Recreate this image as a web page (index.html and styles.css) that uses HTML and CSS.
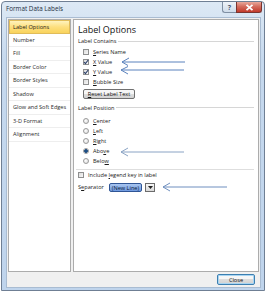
FILE: index.html
```html
<!DOCTYPE html>
<html>
<head>
<meta charset="utf-8">
<link rel="stylesheet" href="styles.css">
</head>
<body>
<div class="window">
  <div class="titlebar">
    <span class="title">Format Data Labels</span>
    <div class="caption-btns">
      <span class="cbtn help">?</span>
      <span class="cbtn close"><svg width="9" height="7" viewBox="0 0 9 7"><path d="M1.5 0.8 L7.5 6.2 M7.5 0.8 L1.5 6.2" stroke="#fff" stroke-width="1.8"/></svg></span>
    </div>
  </div>
  <div class="client">
    <div class="panes">
      <ul class="nav">
        <li class="sel">Label Options</li>
        <li>Number</li>
        <li>Fill</li>
        <li>Border Color</li>
        <li>Border Styles</li>
        <li>Shadow</li>
        <li>Glow and Soft Edges</li>
        <li>3-D Format</li>
        <li>Alignment</li>
      </ul>
      <div class="content">
        <div class="heading">Label Options</div>
        <div class="group-label"><span>Label Contains</span></div>
        <div class="opts">
          <div class="row"><span class="cb"></span><span><u>S</u>eries Name</span></div>
          <div class="row"><span class="cb on"><svg width="6" height="6" viewBox="0 0 6 6"><path d="M1 3 L2.4 4.6 L5.2 1" stroke="#2a3f6a" stroke-width="1.1" fill="none"/></svg></span><span><u>X</u> Value</span></div>
          <div class="row"><span class="cb on"><svg width="6" height="6" viewBox="0 0 6 6"><path d="M1 3 L2.4 4.6 L5.2 1" stroke="#2a3f6a" stroke-width="1.1" fill="none"/></svg></span><span><u>Y</u> Value</span></div>
          <div class="row"><span class="cb"></span><span><u>B</u>ubble Size</span></div>
        </div>
        <div class="btn reset"><u>R</u>eset Label Text</div>
        <div class="group-label pos"><span>Label Position</span></div>
        <div class="opts radios">
          <div class="row"><span class="rb"></span><span><u>C</u>enter</span></div>
          <div class="row"><span class="rb"></span><span><u>L</u>eft</span></div>
          <div class="row"><span class="rb"></span><span><u>R</u>ight</span></div>
          <div class="row"><span class="rb on"></span><span>Abo<u>v</u>e</span></div>
          <div class="row"><span class="rb"></span><span>Belo<u>w</u></span></div>
        </div>
        <div class="sep"></div>
        <div class="row legend"><span class="cb"></span><span>Include <u>l</u>egend key in label</span></div>
        <div class="row separator">
          <span>S<u>e</u>parator</span>
          <div class="combo">
            <span class="combo-text">(New Line)</span>
            <span class="combo-btn"><svg width="5" height="3" viewBox="0 0 5 3"><path d="M0 0 L5 0 L2.5 3 Z" fill="#222"/></svg></span>
          </div>
        </div>
        <svg class="arrow a1" width="66" height="10" viewBox="0 0 66 10"><path d="M2 5 L65 5 M9 1 L2 5 L8 8.5" stroke="#5a82bd" stroke-width="1" fill="none"/></svg>
        <svg class="arrow a2" width="66" height="10" viewBox="0 0 66 10"><path d="M2 5 L65 5 M9 1.5 L2 5 L9 9" stroke="#5a82bd" stroke-width="1" fill="none"/></svg>
        <svg class="arrow a3" width="66" height="10" viewBox="0 0 66 10"><path d="M2 5 L65 5 M9 1 L2 5 L9 9" stroke="#8aa3c4" stroke-width="1" fill="none"/></svg>
        <svg class="arrow a4" width="67" height="10" viewBox="0 0 67 10"><path d="M2 5 L66 5 M9 1 L2 5 L9 9" stroke="#6f8fbf" stroke-width="1" fill="none"/></svg>
      </div>
    </div>
    <div class="footer">
      <div class="btn close-btn">Close</div>
    </div>
  </div>
</div>
</body>
</html>
```
FILE: styles.css
```css
* { box-sizing: border-box; }
html, body { margin: 0; padding: 0; background: #ffffff; }
body {
  width: 267px;
  height: 294px;
  overflow: hidden;
  font-family: "Open Sans", "Noto Sans", sans-serif;
  font-size: 5.6px;
  color: #1a1a1a;
}
.window {
  margin: 1px 0 0 1px;
  width: 264px;
  height: 290px;
  border: 1px solid #6f7f94;
  border-radius: 4px 4px 0 0;
  background: linear-gradient(#dde9f5, #c6d9ee 20%, #bfd4ec);
  display: flex;
  flex-direction: column;
}
.titlebar {
  height: 15px;
  display: flex;
  align-items: flex-start;
  justify-content: space-between;
  padding-left: 4px;
  padding-right: 2px;
}
.title {
  font-size: 6.3px;
  line-height: 13px;
  color: #1e2e40;
}
.caption-btns { display: flex; }
.cbtn {
  height: 11px;
  display: flex;
  align-items: center;
  justify-content: center;
  border: 1px solid #7f8fa3;
  border-top: none;
}
.help {
  width: 14px;
  border-radius: 0 0 0 3px;
  background: linear-gradient(#eef3f9, #cfdcea);
  font-size: 7px;
  font-weight: bold;
  color: #4a5870;
  border-right: none;
}
.close {
  width: 26px;
  border-radius: 0 0 3px 0;
  border-color: #7a3530;
  background: linear-gradient(#e9a99c, #d46d5e 45%, #c2392b);
}
.client {
  flex: 1;
  margin: 0 3px 2px 4px;
  border: 1px solid #a9bcd2;
  background: #f0f0f0;
  display: flex;
  flex-direction: column;
  padding: 1px 1px 0 1px;
}
.panes {
  display: flex;
  gap: 2px;
  height: 253px;
}
.nav {
  list-style: none;
  margin: 0;
  padding: 0;
  width: 63px;
  border: 1px solid #acacac;
  background: #fff;
}
.nav li {
  height: 13.5px;
  line-height: 13px;
  padding-left: 4px;
  border-bottom: 1px solid #eeeeee;
  color: #2b2b2b;
  white-space: nowrap;
  overflow: hidden;
}
.nav li.sel {
  background: linear-gradient(#fff3bd, #fddf7e 50%, #f9d35c);
  border: 1px solid #e0bc5a;
  padding-left: 3px;
  color: #1a1a1a;
}
.content {
  position: relative;
  flex: 1;
  border: 1px solid #acacac;
  background: #fff;
  padding: 4px 2px 0 4px;
}
.heading {
  font-size: 9px;
  line-height: 12px;
  color: #111;
}
.group-label {
  margin-top: 1px;
  height: 8px;
  line-height: 8px;
  display: flex;
  align-items: center;
  gap: 2px;
}
.group-label::after {
  content: "";
  flex: 1;
  height: 1px;
  background: #d6d6d6;
  margin-right: 2px;
}
.group-label.pos { margin-top: 4.5px; }
.opts { margin-top: 2px; padding-left: 5px; }
.opts.radios { margin-top: 4px; }
.row {
  height: 10px;
  display: flex;
  align-items: center;
  gap: 4px;
  white-space: nowrap;
}
.cb {
  width: 6px;
  height: 6px;
  border: 1px solid #8e8f8f;
  background: linear-gradient(135deg, #dcdcdc, #f8f8f8);
  display: flex;
  align-items: center;
  justify-content: center;
  flex: none;
}
.cb svg { display: block; margin: -1px; }
.rb {
  width: 6px;
  height: 6px;
  border-radius: 50%;
  border: 1px solid #9a9a9a;
  background: radial-gradient(circle at 40% 40%, #ffffff, #d8d8d8);
  flex: none;
}
.rb.on {
  background: radial-gradient(circle, #1d4f86 0 1.6px, #e8eef5 2px);
}
.btn {
  display: flex;
  align-items: center;
  justify-content: center;
  border: 1px solid #707070;
  border-radius: 2px;
  background: linear-gradient(#f6f6f6 45%, #dddddd 50%, #d2d2d2);
  white-space: nowrap;
}
.reset {
  margin: 2px 0 0 5px;
  width: 52px;
  height: 10px;
  color: #111;
}
.sep {
  margin: 3px 2px 0 -2px;
  height: 1px;
  background: #dedede;
}
.legend { margin-top: 0.5px; }
.separator { margin-top: 2px; gap: 5px; }
.combo {
  display: flex;
  align-items: center;
  gap: 3px;
  height: 10px;
}
.combo-text {
  height: 9px;
  line-height: 8px;
  padding: 0 2px;
  border: 1px solid #2f5596;
  border-radius: 2px;
  color: #0b1a3a;
  background: linear-gradient(#a9c6f0, #6f9ae0);
}
.combo-btn {
  width: 10px;
  height: 9px;
  border: 1px solid #6c6c6c;
  background: linear-gradient(#f7f7f7, #d9d9d9);
  display: flex;
  align-items: center;
  justify-content: center;
}
.arrow { position: absolute; display: block; }
.a1 { left: 46px; top: 37px; }
.a2 { left: 45px; top: 45px; }
.a3 { left: 45px; top: 126.5px; }
.a4 { left: 87px; top: 162px; }
.footer {
  flex: 1;
  display: flex;
  justify-content: flex-end;
  align-items: flex-start;
  padding: 2px 4px 0 0;
}
.close-btn {
  width: 38px;
  height: 11px;
  border-color: #3c7fb1;
  box-shadow: inset 0 0 0 1px #a8d5f2;
  color: #111;
}
```
